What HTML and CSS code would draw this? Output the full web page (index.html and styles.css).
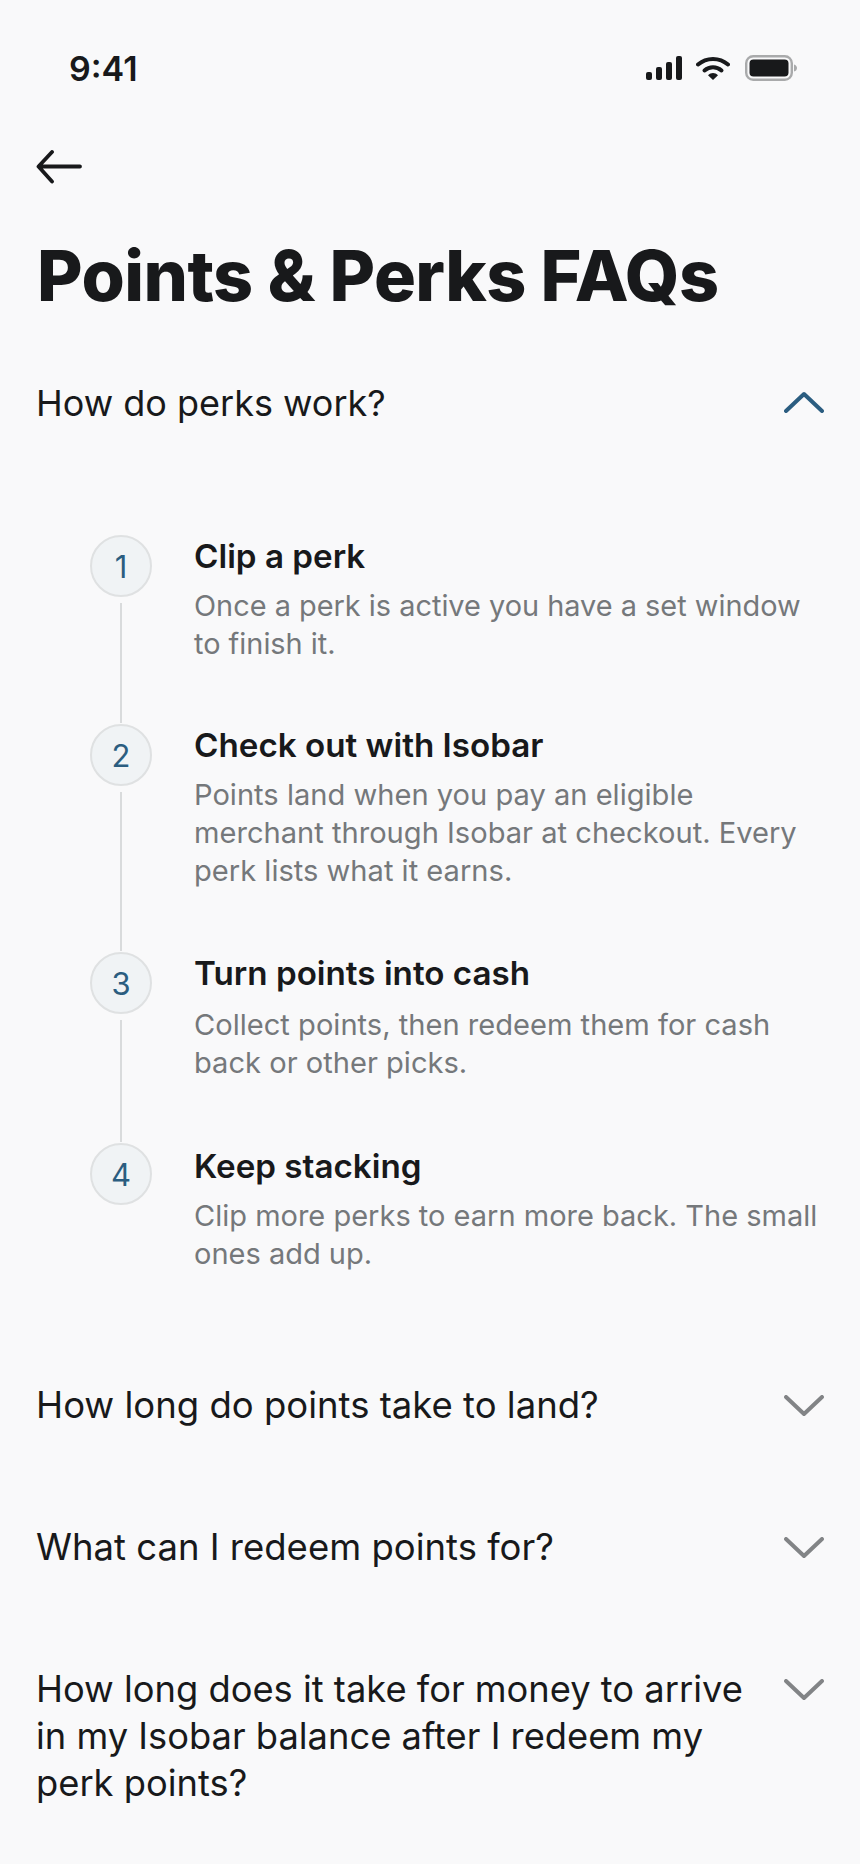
FILE: index.html
```html
<!DOCTYPE html>
<html lang="en">
<head>
  <meta charset="UTF-8">
  <title>Points &amp; Perks FAQs</title>
  <link rel="stylesheet" href="styles.css">
</head>
<body>
  <div class="screen">
    <div class="status-bar">
      <span class="time">9:41</span>
      <div class="status-icons">
        <svg class="signal" width="37" height="24" viewBox="0 0 37 24">
          <rect x="0" y="16" width="6" height="8" rx="2"/>
          <rect x="10" y="11" width="6" height="13" rx="2"/>
          <rect x="20" y="6" width="6" height="18" rx="2"/>
          <rect x="30" y="0" width="6" height="24" rx="2"/>
        </svg>
        <svg class="wifi" width="34" height="24" viewBox="0 0 34 24">
          <path d="M2 8.500C10.500 1 23.500 1 32 8.500" fill="none" stroke="#18191b" stroke-width="4" stroke-linecap="round"/>
          <path d="M8.500 14.500C13.500 10.200 20.500 10.200 25.500 14.500" fill="none" stroke="#18191b" stroke-width="4" stroke-linecap="round"/>
          <path d="M12 19.200C15 16.200 19 16.200 22 19.200L17 24Z"/>
        </svg>
        <svg class="battery" width="52" height="26" viewBox="0 0 52 26">
          <rect x="1.200" y="1.200" width="45.600" height="23.600" rx="7" fill="none" stroke="#a9aaab" stroke-width="2.400"/>
          <rect x="4.500" y="4.500" width="39" height="17" rx="4"/>
          <path d="M49 9.500C51 10 52 11.500 52 13S51 16 49 16.500Z" fill="#a9aaab"/>
        </svg>
      </div>
    </div>

    <button class="back" aria-label="Back">
      <svg width="46" height="34" viewBox="0 0 46 34">
        <path d="M44 16.500H3M16 2 2.500 16.500 16 31.500" fill="none" stroke="#18191b" stroke-width="3.800" stroke-linecap="round" stroke-linejoin="round"/>
      </svg>
    </button>

    <h1>Points &amp; Perks FAQs</h1>

    <div class="faq faq-open">
      <span class="question">How do perks work?</span>
      <svg class="chevron chevron-up" width="40" height="22" viewBox="0 0 40 22">
        <path d="M2 20 20 3 38 20"/>
      </svg>
    </div>

    <ol class="steps">
      <li class="step">
        <div class="rail"><span class="num">1</span><span class="line"></span></div>
        <div class="step-text">
          <h2>Clip a perk</h2>
          <p>Once a perk is active you have a set window to finish it.</p>
        </div>
      </li>
      <li class="step">
        <div class="rail"><span class="num">2</span><span class="line"></span></div>
        <div class="step-text">
          <h2>Check out with Isobar</h2>
          <p>Points land when you pay an eligible merchant through Isobar at checkout. Every perk lists what it earns.</p>
        </div>
      </li>
      <li class="step">
        <div class="rail"><span class="num">3</span><span class="line"></span></div>
        <div class="step-text">
          <h2>Turn points into cash</h2>
          <p class="spaced">Collect points, then redeem them for cash back or other picks.</p>
        </div>
      </li>
      <li class="step">
        <div class="rail"><span class="num">4</span></div>
        <div class="step-text">
          <h2>Keep stacking</h2>
          <p>Clip more perks to earn more back. The small ones add up.</p>
        </div>
      </li>
    </ol>

    <div class="faq">
      <span class="question">How long do points take to land?</span>
      <svg class="chevron" width="40" height="22" viewBox="0 0 40 22"><path d="M2 2 20 19 38 2"/></svg>
    </div>
    <div class="faq">
      <span class="question">What can I redeem points for?</span>
      <svg class="chevron" width="40" height="22" viewBox="0 0 40 22"><path d="M2 2 20 19 38 2"/></svg>
    </div>
    <div class="faq">
      <span class="question question-long">How long does it take for money to arrive in my Isobar balance after I redeem my perk points?</span>
      <svg class="chevron" width="40" height="22" viewBox="0 0 40 22"><path d="M2 2 20 19 38 2"/></svg>
    </div>
  </div>
</body>
</html>
```

FILE: styles.css
```css
* {
  box-sizing: border-box;
}
body {
  margin: 0;
  background: #f9f9fa;
  color: #18191b;
  font-family: Inter, "Liberation Sans", sans-serif;
}
.screen {
  width: 860px;
  height: 1864px;
  padding: 0 36px;
  overflow: hidden;
}
.status-bar {
  display: flex;
  justify-content: space-between;
  align-items: center;
  height: 40px;
  margin-top: 48px;
  padding: 0 0 0 33px;
}
.time {
  font-size: 34px;
  font-weight: 580;
}
.status-icons {
  display: flex;
  align-items: center;
  gap: 15px;
  margin-right: 27px;
}
.status-icons .signal {
  margin-right: -2px;
}
.status-icons svg {
  fill: #18191b;
  display: block;
}
.back {
  display: block;
  margin: 62px 0 0;
  padding: 0;
  border: 0;
  background: none;
}
.back svg {
  display: block;
}
h1 {
  margin: 52px 0 0 1px;
  font-size: 70px;
  line-height: 80px;
  font-weight: 800;
  letter-spacing: -0.55px;
}
.faq {
  display: flex;
  justify-content: space-between;
  align-items: flex-start;
  gap: 30px;
}
.faq-open {
  margin-top: 64px;
}
.question {
  font-size: 36.500px;
  line-height: 47px;
  flex: 1;
}
.faq-open .question {
  font-size: 36px;
}
.question-long {
  font-size: 36.300px;
}
.chevron {
  flex: none;
  margin-top: 13px;
}
.chevron-up {
  margin-top: 11px;
}
.chevron path {
  fill: none;
  stroke: #828486;
  stroke-width: 4;
  stroke-linecap: round;
  stroke-linejoin: round;
}
.chevron-up path {
  stroke: #2b5d80;
}
.steps {
  list-style: none;
  margin: 108px 0 0;
  padding: 0 0 0 54px;
}
.step {
  display: flex;
}
.rail {
  display: flex;
  flex-direction: column;
  align-items: center;
  width: 62px;
  flex: none;
}
.num {
  display: flex;
  align-items: center;
  justify-content: center;
  width: 62px;
  height: 62px;
  flex: none;
  border-radius: 50%;
  border: 2px solid #dfe1e2;
  background: #f0f3f5;
  color: #2b5d80;
  font-size: 31px;
}
.line {
  flex: 1;
  width: 2px;
  margin: 6px 0 1px;
  background: #d9dbdc;
}
.step-text {
  flex: 1;
  margin-left: 42px;
  padding-bottom: 61px;
}
.step:nth-child(2) .step-text {
  padding-bottom: 62px;
}
.step:last-child .step-text {
  padding: 2px 0 0;
}
h2 {
  margin: 0;
  font-size: 33.200px;
  line-height: 43px;
  font-weight: 590;
}
p {
  margin: 9px 0 0;
  font-size: 29.100px;
  line-height: 38px;
  color: #75787b;
}
.step:first-child p {
  font-size: 28.900px;
}
.step:last-child p {
  font-size: 29px;
}
p.spaced {
  margin-top: 11px;
}
.steps + .faq {
  margin-top: 109px;
}
.faq + .faq {
  margin-top: 95px;
}
```
